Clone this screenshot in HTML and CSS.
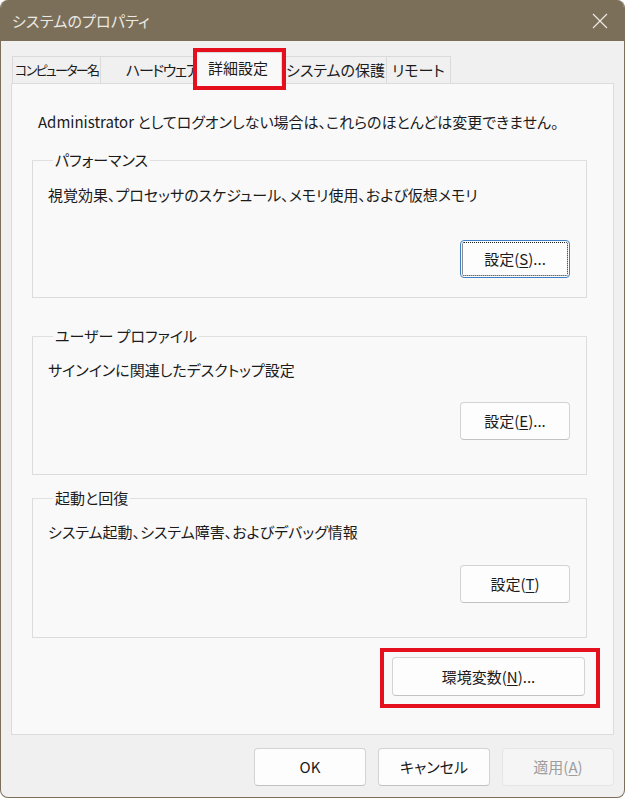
FILE: index.html
```html
<!DOCTYPE html>
<html lang="ja">
<head>
<meta charset="utf-8">
<title>システムのプロパティ</title>
<link rel="stylesheet" href="styles.css">
</head>
<body>
<div class="window">
  <div class="titlebar">
    <span class="title">システムのプロパティ</span>
    <svg class="close" width="16" height="16" viewBox="0 0 16 16" aria-hidden="true">
      <path d="M1 1 L15 15 M15 1 L1 15" stroke="#ece9e3" stroke-width="1.2" fill="none"/>
    </svg>
  </div>
  <div class="client">
    <div class="tabs">
      <div class="tab tab-name">コンピューター名</div>
      <div class="tab tab-hw">ハードウェア</div>
      <div class="tab tab-adv selected">詳細設定<span class="mark"></span></div>
      <div class="tab tab-prot">システムの保護</div>
      <div class="tab tab-remote">リモート</div>
    </div>
    <div class="panel">
      <p class="note">Administrator としてログオンしない場合は、これらのほとんどは変更できません。</p>

      <fieldset class="group group-perf">
        <legend>パフォーマンス</legend>
        <p class="desc">視覚効果、プロセッサのスケジュール、メモリ使用、および仮想メモリ</p>
        <div class="actions"><button class="btn btn-set focused">設定(<u>S</u>)...</button></div>
      </fieldset>

      <fieldset class="group group-profile">
        <legend>ユーザー プロファイル</legend>
        <p class="desc">サインインに関連したデスクトップ設定</p>
        <div class="actions"><button class="btn btn-set">設定(<u>E</u>)...</button></div>
      </fieldset>

      <fieldset class="group group-startup">
        <legend>起動と回復</legend>
        <p class="desc">システム起動、システム障害、およびデバッグ情報</p>
        <div class="actions"><button class="btn btn-set">設定(<u>T</u>)</button></div>
      </fieldset>

      <div class="env-row">
        <button class="btn btn-env">環境変数(<u>N</u>)...<span class="mark"></span></button>
      </div>
    </div>
    <div class="footer">
      <button class="btn btn-dlg">OK</button>
      <button class="btn btn-dlg">キャンセル</button>
      <button class="btn btn-dlg disabled">適用(<u>A</u>)</button>
    </div>
  </div>
</div>
</body>
</html>
```

FILE: styles.css
```css
html, body {
  margin: 0;
  padding: 0;
  background: #ffffff;
}

body {
  font-family: "Noto Sans CJK JP", "Noto Sans", sans-serif;
  font-feature-settings: "palt";
  font-size: 15px;
  line-height: 20px;
  color: #1b1b1b;
}

.window {
  width: 623px;
  height: 797px;
  border: 1px solid #7b6f5a;
  border-top: none;
  border-radius: 8px;
  overflow: hidden;
  display: flex;
  flex-direction: column;
  background: #f0f0f0;
}

/* caption */
.titlebar {
  height: 41px;
  flex: none;
  background: #7b6f5a;
  display: flex;
  align-items: center;
  justify-content: space-between;
  padding: 0 16px 0 11px;
}

.title {
  color: #ece9e3;
  font-size: 15px;
  letter-spacing: 0.2px;
}

.close {
  display: block;
}

/* dialog client area */
.client {
  flex: 1;
  display: flex;
  flex-direction: column;
  padding: 11px 10px 0 10px;
}

.tabs {
  display: flex;
  align-items: flex-end;
  height: 31px;
  padding-left: 1px;
  position: relative;
  z-index: 1;
}

.tab {
  box-sizing: border-box;
  height: 27px;
  line-height: 25px;
  border: 1px solid #dadada;
  border-bottom: none;
  background: #f0f0f0;
  white-space: nowrap;
  overflow: hidden;
  padding-left: 3px;
}

.tab + .tab {
  border-left: none;
}

.tab-name {
  width: 89px;
  font-size: 13px;
  letter-spacing: -1.7px;
  padding-left: 2px;
}

.tab-hw {
  width: 98px;
  padding-left: 25px;
  letter-spacing: -1.4px;
}

.tab-prot { width: 105px; padding-left: 4px; }
.tab-remote { width: 64px; padding-left: 5px; }

.tab.selected {
  position: relative;
  width: 86px;
  height: 32px;
  margin-left: -3px;
  margin-bottom: -1px;
  padding-left: 11px;
  line-height: 30px;
  background: #f9f9f9;
  border: 1px solid #dadada;
  border-bottom: none;
  overflow: visible;
}

/* red highlight frames */
.mark {
  position: absolute;
  border: 4px solid #e5101d;
  pointer-events: none;
}

.tab.selected .mark {
  left: -4px;
  right: -5px;
  top: -5px;
  bottom: -6px;
}

.panel {
  box-sizing: border-box;
  height: 652px;
  background: #f9f9f9;
  border: 1px solid #dcdcdc;
  padding: 28px 26px 0 20px;
  display: flex;
  flex-direction: column;
}

.note {
  margin: 0 0 18px 6px;
}

.group {
  margin: 0;
  border: 1px solid #dcdcdc;
  border-top-color: #e0e0e0;
  padding: 0 16px 0 15px;
  min-width: 0;
}

.group legend {
  padding: 0 2px;
  margin-left: 5px;
  line-height: 20px;
}

.desc {
  margin: 0;
}

.actions {
  display: flex;
  justify-content: flex-end;
}

.group-perf { padding-top: 15px; padding-bottom: 19px; }
.group-perf .actions { margin-top: 35px; }

.group-profile { margin-top: 28px; padding-top: 14px; padding-bottom: 34px; }
.group-profile .actions { margin-top: 22px; }

.group-startup { margin-top: 13px; padding-top: 14px; padding-bottom: 34px; }
.group-startup .actions { margin-top: 23px; }

/* push buttons */
.btn {
  box-sizing: border-box;
  font: inherit;
  font-feature-settings: "palt";
  color: #1b1b1b;
  background: #fdfdfd;
  border: 1px solid #d3d3d3;
  border-bottom-color: #c2c2c2;
  border-radius: 4px;
  padding: 0;
  text-align: center;
}

.btn u {
  text-underline-offset: 2px;
}

.btn-set {
  width: 110px;
  height: 38px;
}

.btn.focused {
  border: 1px solid #3c7fc4;
  outline: 1px dotted #1b1b1b;
  outline-offset: -3px;
}

.env-row {
  display: flex;
  justify-content: flex-end;
  margin-top: 19px;
  padding-right: 2px;
}

.btn-env {
  position: relative;
  width: 193px;
  height: 39px;
}

.btn-env .mark {
  left: -13px;
  right: -16px;
  top: -10px;
  bottom: -13px;
}

.footer {
  display: flex;
  justify-content: flex-end;
  gap: 12px;
  padding: 13px 0 0 0;
}

.btn-dlg {
  width: 112px;
  height: 38px;
}

.btn-dlg.disabled {
  background: #f5f5f5;
  border-color: #e5e5e5;
  color: #9d9d9d;
}
```
